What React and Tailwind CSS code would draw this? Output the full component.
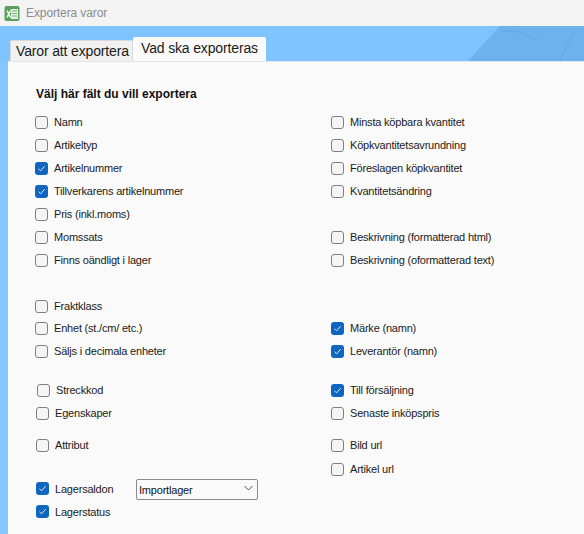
const rows = [
  { h: 23, left: { label: "Namn" }, right: { label: "Minsta köpbara kvantitet" } },
  { h: 23, left: { label: "Artikeltyp" }, right: { label: "Köpkvantitetsavrundning" } },
  { h: 23, left: { label: "Artikelnummer", checked: true }, right: { label: "Föreslagen köpkvantitet" } },
  { h: 23, left: { label: "Tillverkarens artikelnummer", checked: true }, right: { label: "Kvantitetsändring" } },
  { h: 23, left: { label: "Pris (inkl.moms)" } },
  { h: 23, left: { label: "Momssats" }, right: { label: "Beskrivning (formatterad html)" } },
  { h: 46, left: { label: "Finns oändligt i lager" }, right: { label: "Beskrivning (oformatterad text)" } },
  { h: 22, left: { label: "Fraktklass" } },
  { h: 23, left: { label: "Enhet (st./cm/ etc.)" }, right: { label: "Märke (namn)", checked: true } },
  { h: 39, left: { label: "Säljs i decimala enheter" }, right: { label: "Leverantör (namn)", checked: true } },
  { h: 23, left: { label: "Streckkod", indent: "ml-[2px]" }, right: { label: "Till försäljning", checked: true } },
  { h: 32, left: { label: "Egenskaper", indent: "ml-[1px]" }, right: { label: "Senaste inköpspris" } },
  { h: 25, left: { label: "Attribut", indent: "ml-[1px]" }, right: { label: "Bild url" } },
];

function Check({ checked }) {
  if (checked) {
    return (
      <span className="flex h-[13px] w-[13px] shrink-0 items-center justify-center rounded-[3px] bg-[#0f66c0]">
        <svg width="9" height="9" viewBox="0 0 9 9" fill="none" stroke="#dbe9f7" strokeWidth="1">
          <path d="M1.5 4.8 L3.6 6.8 L7.6 2.2" />
        </svg>
      </span>
    );
  }
  return <span className="h-[13px] w-[13px] shrink-0 rounded-[3px] border border-[#7f7f7f] bg-[#f5f5f5]" />;
}

function Field({ item }) {
  if (!item) return <div />;
  return (
    <div className={`flex items-center gap-[6px] ${item.indent || ""}`}>
      <Check checked={item.checked} />
      <span className="whitespace-nowrap text-[11px] leading-[14px] tracking-[-0.2px] text-[#1a1a1a]">{item.label}</span>
    </div>
  );
}

export default function App() {
  return (
    <div className="flex h-[534px] w-[584px] flex-col overflow-hidden bg-[#85c6ff] font-['Liberation_Sans',Arial,sans-serif]">
      <div className="flex h-[26px] items-center gap-[6px] bg-[#f3f3f3] pl-[4px]">
        <svg width="16" height="17" viewBox="0 0 16 17">
          <rect x="0.5" y="1" width="15" height="15" rx="2" fill="#5aa05a" />
          <rect x="7" y="4" width="7" height="10" fill="#e6efe4" />
          <path d="M8 6h5M8 8.5h5M8 11h5" stroke="#7fae7c" strokeWidth="1" />
          <path d="M3 5.5l3.5 7M6.5 5.5l-3.5 7" stroke="#ffffff" strokeWidth="1.4" />
        </svg>
        <span className="text-[12px] tracking-[-0.1px] text-[#8c8c8c]">Exportera varor</span>
      </div>

      <div className="relative flex h-[35px] items-end overflow-hidden bg-[#7fc3ff] pl-[10px]">
        <svg className="absolute right-0 top-0" width="116" height="35" viewBox="0 0 116 35">
          <path d="M0 35 L32 0 H116 V35 Z" fill="#6cb3ee" />
          <path d="M32 6 C50 2 60 10 70 14 M108 5 C100 18 96 24 92 35" stroke="#62a9e4" strokeWidth="1" fill="none" />
        </svg>
        <div className="relative flex h-[21px] w-[123px] items-center whitespace-nowrap rounded-t-[2px] border border-b-0 border-[#d9d9d9] bg-[#f0f0f0] pl-[5px] text-[14px] tracking-[-0.15px] text-[#1a1a1a]">
          Varor att exportera
        </div>
        <div className="relative flex h-[24px] w-[133px] items-start whitespace-nowrap rounded-t-[2px] bg-[#fafafa] pl-[8px] pt-[1px] text-[14px] tracking-[-0.15px] text-[#1a1a1a]">
          Vad ska exporteras
        </div>
      </div>

      <div className="ml-[8px] flex flex-1 flex-col border-t border-[#e5e5e5] bg-[#fafafa]">
        <h1 className="ml-[28px] mt-[25px] text-[12px] font-bold leading-[14px] text-[#111111]">
          Välj här fält du vill exportera
        </h1>
        <div className="ml-[27px] mt-[13px] flex flex-col">
          {rows.map((row) => (
            <div key={row.left.label} style={{ height: row.h }} className="grid grid-cols-[296px_1fr] items-start pt-[1px]">
              <Field item={row.left} />
              <Field item={row.right} />
            </div>
          ))}
          <div className="grid h-[15px] grid-cols-[296px_1fr] items-start">
            <div />
            <Field item={{ label: "Artikel url" }} />
          </div>
          <div className="flex h-[23px] items-center">
            <div className="ml-[1px] w-[100px]">
              <Field item={{ label: "Lagersaldon", checked: true }} />
            </div>
            <div className="relative mb-[3px] h-[21px] w-[122px]">
              <select className="h-full w-full appearance-none rounded-[2px] border border-[#8a8a8a] bg-[#fafafa] pl-[2px] text-[11px] tracking-[-0.2px] text-[#111111]">
                <option>Importlager</option>
              </select>
              <svg className="pointer-events-none absolute right-[5px] top-[8px]" width="9" height="6" viewBox="0 0 9 6" fill="none" stroke="#555555" strokeWidth="1">
                <path d="M0.5 1l4 4 4-4" />
              </svg>
            </div>
          </div>
          <div className="ml-[1px] flex h-[23px] items-center">
            <Field item={{ label: "Lagerstatus", checked: true }} />
          </div>
        </div>
      </div>
    </div>
  );
}
